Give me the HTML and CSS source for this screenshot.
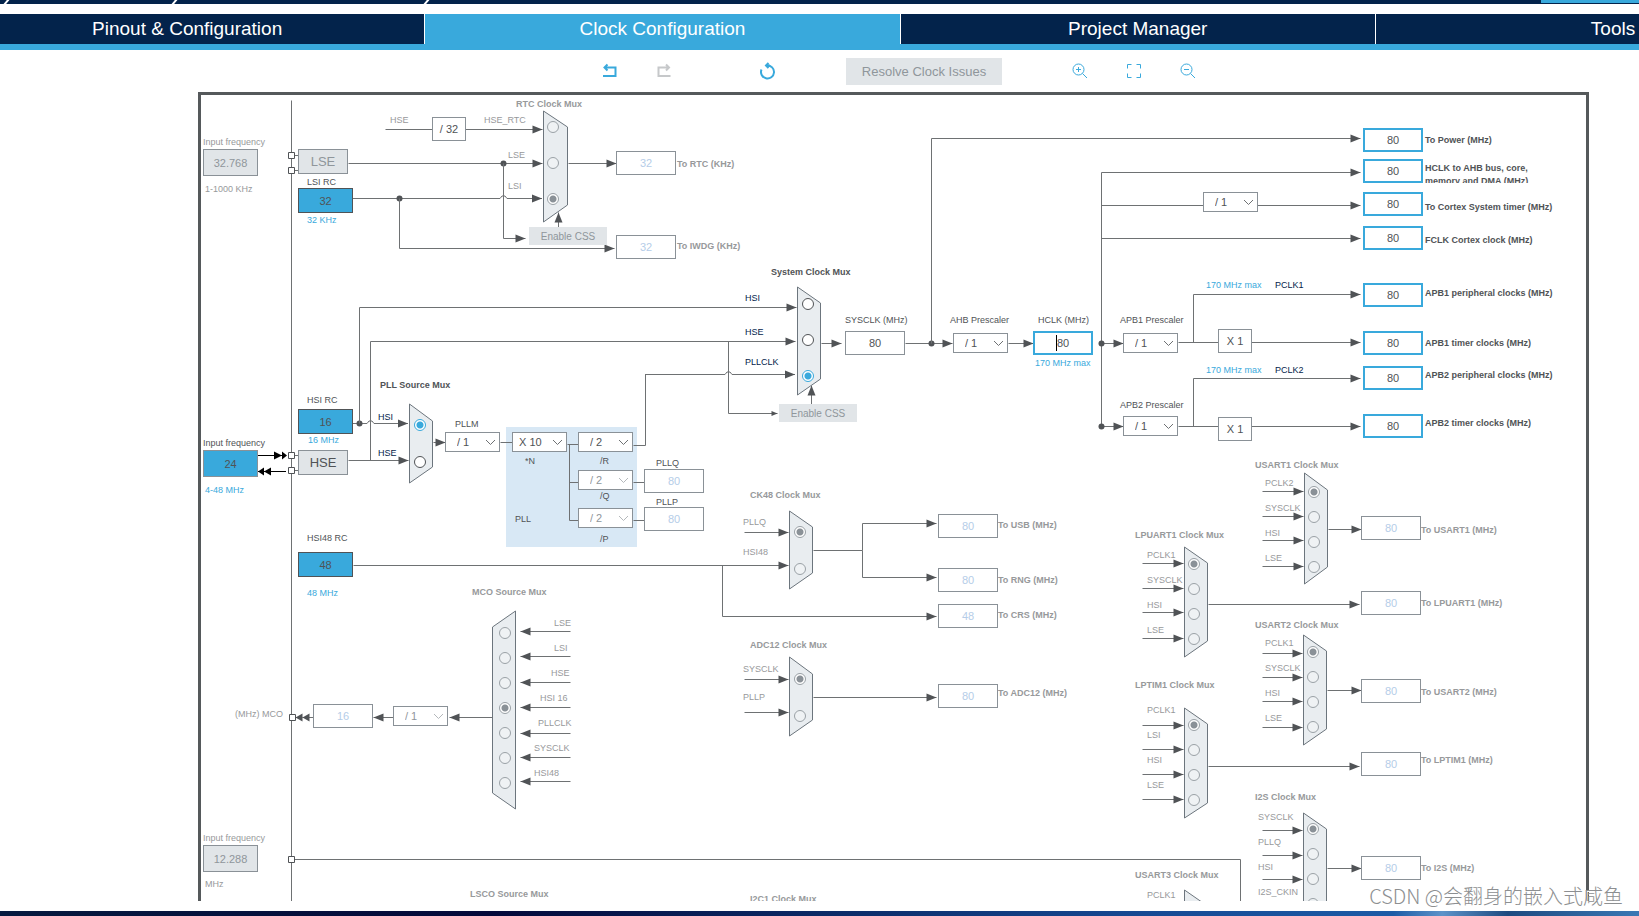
FILE: index.html
```html
<!DOCTYPE html>
<html lang="en">
<head>
<meta charset="utf-8">
<title>Clock Configuration</title>
<link rel="stylesheet" href="styles.css">
</head>
<body>
<div class="breadcrumb">
  <svg class="slashes" width="440" height="4" viewBox="0 0 440 4" aria-hidden="true">
    <path d="M4 5 9 -1M172 5 177 -1M424 5 429 -1"/>
  </svg>
  <span class="accent"></span>
</div>
<nav class="tabs">
  <button type="button" class="tab">Pinout &amp; Configuration</button>
  <button type="button" class="tab active">Clock Configuration</button>
  <button type="button" class="tab">Project Manager</button>
  <button type="button" class="tab">Tools</button>
</nav>
<div class="toolbar">
  <div class="group">
    <button type="button" class="tool" aria-label="Undo"><svg width="18" height="18" viewBox="0 0 18 18"><path class="bold" d="M4 5.500H14.500V14M2 14H15.500M6.500 2.500 3.500 5.500 6.500 8.500"/></svg></button>
    <button type="button" class="tool off" aria-label="Redo" disabled><svg width="18" height="18" viewBox="0 0 18 18"><path class="mid" d="M14 5.500H3.500V14H15.500M11 2.500 14 5.500 11 8.500"/></svg></button>
  </div>
  <button type="button" class="tool" aria-label="Reset"><svg width="18" height="18" viewBox="0 0 18 18"><path class="mid" d="M2.500 7.500A6.500 6.500 0 1 0 8 3.500H11M7 3.500H9M9.500 1 7 3.500 9.500 6"/></svg></button>
  <button type="button" class="resolve" disabled>Resolve Clock Issues</button>
  <div class="group">
    <button type="button" class="tool" aria-label="Zoom in"><svg width="18" height="18" viewBox="0 0 18 18"><circle cx="7.500" cy="7.500" r="5.500"/><path d="M11.500 11.500 16 16M5 7.500H10M7.500 5V10"/></svg></button>
    <button type="button" class="tool" aria-label="Fit"><svg width="18" height="18" viewBox="0 0 18 18"><path d="M2.500 6.500V2.500H6.500M11.500 2.500H15.500V6.500M15.500 11.500V15.500H11.500M6.500 15.500H2.500V11.500"/></svg></button>
    <button type="button" class="tool" aria-label="Zoom out"><svg width="18" height="18" viewBox="0 0 18 18"><circle cx="7.500" cy="7.500" r="5.500"/><path d="M11.500 11.500 16 16M5 7.500H10"/></svg></button>
  </div>
</div>
<main class="board" id="board"></main>
<footer class="desktop"></footer>
<p class="watermark" lang="zh">CSDN @会翻身的嵌入式咸鱼</p>
<script src="diagram.js"></script>
</body>
</html>
```
FILE: styles.css
```css
* { box-sizing: border-box; }

body {
  margin: 0;
  height: 100vh;
  display: flex;
  flex-direction: column;
  overflow: hidden;
  background: #fff;
  font-family: "Liberation Sans", Arial, sans-serif;
  color: #505356;
}

button, input, select { font-family: inherit; margin: 0; }

.breadcrumb {
  display: flex;
  justify-content: space-between;
  flex: none;
  height: 4px;
  background: #03234b;
  overflow: hidden;
}
.slashes { stroke: #fff; stroke-width: 2; fill: none; }
.accent { width: 6vw; height: 3px; background: #39a9dc; }

.tabs {
  display: flex;
  flex: none;
  margin-top: 10px;
  padding-bottom: 6px;
  background: #39a9dc;
  overflow: hidden;
}
.tab {
  flex: 0 0 29vw;
  height: 30px;
  padding: 0;
  border: 0;
  border-right: 1px solid #fff;
  background: #03234b;
  color: #fff;
  font-size: 19px;
}
.tab:first-child { margin-left: -50px; }
.tab.active { background: #39a9dc; }

.toolbar {
  display: flex;
  align-items: center;
  flex: none;
  height: 42px;
  padding-left: 601px;
}
.group { display: flex; gap: 36px; }
.tool {
  display: block;
  width: 18px;
  height: 18px;
  padding: 0;
  border: 0;
  background: none;
}
.tool svg { display: block; fill: none; stroke: #39a9dc; stroke-width: 1; }
.tool .bold { stroke-width: 2; }
.tool .mid { stroke-width: 2; }
.tool.off svg { stroke: #c6c8ca; }
.group + .tool { margin-left: 86px; }
.resolve {
  width: 156px;
  height: 27px;
  margin: 0 69px 0 69px;
  padding: 0;
  border: 0;
  background: #e1e5e8;
  color: #8f969b;
  font-size: 13px;
}

.board {
  position: relative;
  flex: 1;
  min-height: 0;
  margin: 0 50px 10px 198px;
  border: 3px solid #55595b;
  border-bottom: 0;
  overflow: hidden;
}
.desktop {
  flex: none;
  height: 5px;
  background: linear-gradient(90deg, #061a3f, #04093a 30%, #0b2a66 50%, #164a94 70%, #1c5ba6 85%, #5d93c9 88%, #1d4a80 92%, #3a78b5);
}
.watermark {
  position: absolute;
  right: 16px;
  bottom: 6px;
  margin: 0;
  font: 300 20px/28px "Noto Sans CJK SC", sans-serif;
  color: #8d8f91;
  text-shadow: 1px 1px 0 #fff;
}

/* diagram */
.wires { position: absolute; left: 0; top: 0; }
.wires .wire { fill: none; stroke: #6e7173; stroke-width: 1; }
.wires .tip { fill: #505356; }
.wires .black { fill: #000; }
.wires .wire.ink { stroke: #000; }
.wires .pin { fill: #fff; stroke: #505356; }
.wires .mux { fill: #e9edf0; stroke: #6c757d; }
.wires .pll { fill: #d8e8f5; }

.text {
  position: absolute;
  font-size: 9px;
  line-height: 12px;
  white-space: nowrap;
}
.gray { color: #97999b; }
.dark { color: #505356; }
.navy { color: #03234b; }
.blue { color: #39a9dc; }
.title { font-weight: bold; }
.wrap { width: 130px; height: 21px; line-height: 13px; white-space: normal; overflow: hidden; }

.box {
  position: absolute;
  width: 60px;
  height: 24px;
  padding: 0;
  border: 1px solid #8a9197;
  border-radius: 0;
  background: #fff;
  color: #505356;
  font-size: 11px;
  text-align: center;
  outline: 0;
}
.box.idle { color: #b5cde8; }
.box.live { border: 2px solid #39a9dc; }
.box.source { width: 55px; height: 25px; border-color: #505356; background: #39a9dc; }
.box.entry { width: 55px; height: 27px; border-color: #8a9197; background: #39a9dc; }
.box.entry.gray { background: #e1e5e8; color: #8f969b; }
.box.factor { width: 34px; }
.box.osc { width: 50px; height: 25px; background: #e1e5e8; font-size: 13px; }
.box.osc.gray { color: #8f969b; }
.css {
  position: absolute;
  width: 78px;
  height: 18px;
  padding: 0;
  border: 0;
  background: #e1e5e8;
  color: #8f969b;
  font-size: 10px;
}
.pick { position: absolute; width: 55px; height: 20px; }
.pick select {
  width: 100%;
  height: 100%;
  padding: 0 16px 0 6px;
  border: 1px solid #8a9197;
  border-radius: 0;
  background: #fff;
  color: #505356;
  font-size: 11px;
  appearance: none;
  opacity: 1;
}
.pick.slash select { padding-left: 11px; }
.pick svg { position: absolute; right: 4px; top: 7px; fill: none; stroke: #6e7173; pointer-events: none; }
.pick.off select { color: #8f969b; }
.pick.off svg { stroke: #b4b8bb; }

.radio {
  position: absolute;
  width: 12px;
  height: 12px;
  border: 1px solid #9aa1a6;
  border-radius: 50%;
  background: #eff2f4;
  appearance: none;
}
.radio:checked { background: radial-gradient(circle, #8a9197 3px, #fff 4px); }
.radio.on { border-color: #505356; background: #fff; }
.radio.on:checked { border-color: #39a9dc; background: radial-gradient(circle, #39a9dc 3px, #fff 4px); }
.caret { position: absolute; width: 1px; height: 16px; background: #000; }
```
FILE: diagram.js
```js
const board = document.getElementById('board');
const OX = 201, OY = 95;
const NS = 'http://www.w3.org/2000/svg';

const svg = document.createElementNS(NS, 'svg');
svg.setAttribute('class', 'wires');
svg.setAttribute('width', 1400);
svg.setAttribute('height', 820);
svg.setAttribute('viewBox', `${OX} ${OY} 1400 820`);
board.append(svg);

function shape(cls, d) {
  const p = document.createElementNS(NS, 'path');
  p.setAttribute('class', cls);
  p.setAttribute('d', d);
  svg.append(p);
}
function place(el, x, y) {
  el.style.left = `${x - OX}px`;
  el.style.top = `${y - OY}px`;
  board.append(el);
  return el;
}
function make(tag, cls, text) {
  const el = document.createElement(tag);
  el.className = cls;
  if (text !== undefined) el.textContent = text;
  return el;
}

const H = .5;
// Polyline through points; the last one may carry an arrow head.
function wire(points, head) {
  shape('wire', 'M' + points.map(([x, y]) => `${x + H} ${y + H}`).join('L'));
  if (!head) return;
  const [x, y] = points[points.length - 1];
  const s = head.size || 10, w = s > 6 ? 4 : 2.5, cx = x + H, cy = y + H;
  if (head.dir === 'r') shape('tip', `M${cx} ${cy}l${-s} ${-w}v${2 * w}z`);
  if (head.dir === 'l') shape('tip', `M${cx} ${cy}l${s} ${-w}v${2 * w}z`);
  if (head.dir === 'u') shape('tip', `M${cx} ${cy}l${-w} ${s}h${2 * w}z`);
}
const R = { dir: 'r' }, L = { dir: 'l' }, U = { dir: 'u' };
function dot(x, y) { shape('tip', `M${x - 2.5} ${y + H}a3 3 0 1 0 6 0a3 3 0 1 0 -6 0`); }
function pin(x, y) { shape('pin', `M${x - 2.5} ${y - 2.5}h6v6h-6z`); }
// Horizontal wire that jumps over a vertical one at x = hop.
function hopWire(x1, hop, x2, y) {
  shape('wire', `M${x1} ${y + H}H${hop - 3}L${hop - 1} ${y - 2}H${hop + 2}L${hop + 4} ${y + H}H${x2}`);
  shape('tip', `M${x2} ${y + H}l-10 -4v8z`);
}

function text(x, cy, str, cls = 'gray') { place(make('span', 'text ' + cls, str), x, cy - 6); }
function box(x, y, value, cls, label) {
  const el = make('input', 'box ' + cls);
  el.type = 'text';
  el.value = value;
  el.setAttribute('aria-label', label || 'Frequency');
  place(el, x, y);
}
function pick(x, y, value, off, label) {
  const w = make('span', 'pick' + (off ? ' off' : '') + (value[0] === '/' ? ' slash' : ''));
  const s = make('select', '');
  s.disabled = !!off;
  s.setAttribute('aria-label', label);
  s.append(make('option', '', value));
  w.append(s);
  w.insertAdjacentHTML('beforeend', '<svg width="11" height="7" viewBox="0 0 11 7"><path d="M1 1 5.500 5.500 10 1"/></svg>');
  place(w, x, y);
}
function button(x, y, str, cls) {
  const b = make('button', cls, str);
  b.type = 'button';
  place(b, x, y);
}
function mux(name, xl, xr, l, r, cx, ys, checked, cls = '') {
  shape('mux', `M${xl + H} ${l[0]}L${xr + H} ${r[0]}V${r[1]}L${xl + H} ${l[1]}z`);
  ys.forEach((y, i) => {
    const el = make('input', 'radio ' + cls);
    el.type = 'radio';
    el.name = name;
    el.checked = i === checked;
    el.setAttribute('aria-label', `${name} input ${i + 1}`);
    place(el, cx - 6, y - 6);
  });
}
function inputs(x1, tip, rows) { rows.forEach(y => wire([[x1, y], [tip, y]], R)); }
function labels(x, rows, cls) { rows.forEach(([y, s, dx]) => text(dx || x, y, s, cls)); }

// Chip boundary
wire([[291, 100], [291, 905]]);

// RTC
text(203, 142, 'Input frequency');
box(203, 149, '32.768', 'entry gray', 'LSE input frequency');
text(205, 189, '1-1000 KHz');
wire([[294, 155], [298, 155]]);
wire([[294, 170], [298, 170]]);
pin(291, 155);
pin(291, 170);
button(298, 149, 'LSE', 'box osc gray');
text(307, 182, 'LSI RC', 'dark');
box(298, 188, '32', 'source', 'LSI RC');
text(307, 220, '32 KHz', 'blue');
labels(390, [[120, 'HSE'], [120, 'HSE_RTC', 484], [155, 'LSE', 508], [186, 'LSI', 508]]);
text(516, 104, 'RTC Clock Mux', 'gray title');
wire([[385, 129], [542, 129]], R);
box(432, 117, '/ 32', 'factor', 'HSE divider');
wire([[348, 163], [542, 163]], R);
dot(503, 163);
wire([[503, 163], [503, 238], [525, 238]], R);
hopWire(353, 503, 542, 198);
dot(399, 198);
wire([[399, 198], [399, 248], [614, 248]], R);
wire([[558, 227], [558, 212]], U);
mux('RTC Clock Mux', 543, 567, [111, 222], [127, 205], 553, [127, 163, 199], 2);
button(529, 227, 'Enable CSS', 'css');
wire([[568, 163], [616, 163]], R);
box(616, 151, '32', 'idle', 'RTC');
text(677, 164, 'To RTC (KHz)', 'gray title');
box(616, 235, '32', 'idle', 'IWDG');
text(677, 246, 'To IWDG (KHz)', 'gray title');

// PLL source
text(203, 443, 'Input frequency', 'dark');
box(203, 450, '24', 'entry', 'HSE input frequency');
text(205, 490, '4-48 MHz', 'blue');
shape('wire ink', 'M258 455.5H286M258 471.5H286');
shape('black', 'M274 451.500l8 4l-8 4zM282 451.500l5 4l-5 4zM264 467.500l-6 4l6 4zM271 467.500l-7 4l7 4z');
wire([[294, 455], [298, 455]]);
wire([[294, 470], [298, 470]]);
pin(291, 455);
pin(291, 470);
button(298, 450, 'HSE', 'box osc');
text(307, 400, 'HSI RC', 'dark');
box(298, 409, '16', 'source', 'HSI RC');
text(308, 440, '16 MHz', 'blue');
text(380, 385, 'PLL Source Mux', 'dark title');
labels(378, [[417, 'HSI'], [453, 'HSE']], 'navy');
hopWire(353, 370, 408, 423);
dot(359, 423);
wire([[359, 423], [359, 307], [796, 307]], R);
wire([[348, 460], [408, 460]], R);
wire([[370, 460], [370, 341], [795, 341]], R);
mux('PLL Source Mux', 409, 432, [404, 483], [421, 467], 420, [425, 462], 0, 'on');
wire([[433, 442], [445, 442]], R);
text(455, 424, 'PLLM', 'dark');
shape('pll', 'M506 427H637V547H506z');
wire([[500, 442], [512, 442]]);
wire([[567, 444], [578, 444]]);
wire([[578, 520], [569, 520], [569, 444]]);
wire([[569, 482], [578, 482]]);
wire([[633, 482], [644, 482]]);
wire([[633, 520], [644, 520]]);
wire([[633, 445], [645, 445], [645, 374], [660, 374]]);
hopWire(645, 728, 795, 374);
pick(445, 432, '/ 1', false, 'PLLM');
pick(512, 432, 'X 10', false, 'PLLN');
pick(578, 432, '/ 2', false, 'PLLR');
pick(578, 470, '/ 2', true, 'PLLQ');
pick(578, 508, '/ 2', true, 'PLLP');
labels(600, [[461, '*N', 525], [461, '/R'], [496, '/Q'], [539, '/P'], [519, 'PLL', 515], [463, 'PLLQ', 656], [502, 'PLLP', 656]], 'dark');
box(644, 469, '80', 'idle', 'PLLQ');
box(644, 507, '80', 'idle', 'PLLP');

// System clock
text(771, 272, 'System Clock Mux', 'dark title');
labels(745, [[298, 'HSI'], [332, 'HSE'], [362, 'PLLCLK']], 'navy');
wire([[728, 341], [728, 413], [777, 413]], { dir: 'r', size: 6 });
wire([[811, 404], [811, 385]], U);
mux('System Clock Mux', 797, 820, [287, 395], [303, 379], 808, [304, 340, 376], 2, 'on');
button(779, 404, 'Enable CSS', 'css');
wire([[821, 343], [841, 343]], R);
labels(845, [[320, 'SYSCLK (MHz)'], [320, 'AHB Prescaler', 950], [320, 'HCLK (MHz)', 1038]], 'dark');
wire([[905, 343], [952, 343]], R);
dot(931, 343);
wire([[931, 343], [931, 138], [1360, 138]], R);
wire([[1008, 343], [1033, 343]], R);
box(845, 331, '80', '', 'SYSCLK');
pick(953, 333, '/ 1', false, 'AHB Prescaler');
box(1033, 331, '80', 'live', 'HCLK');
place(make('span', 'caret'), 1056, 335);
text(1035, 363, '170 MHz max', 'blue');

// Bus clocks
wire([[1101, 426], [1101, 172], [1360, 172]], R);
wire([[1101, 205], [1360, 205]], R);
wire([[1101, 238], [1360, 238]], R);
wire([[1101, 343], [1123, 343]], R);
wire([[1101, 426], [1123, 426]], R);
dot(1101, 343);
dot(1101, 426);
wire([[1178, 342], [1360, 342]], R);
wire([[1178, 426], [1360, 426]], R);
wire([[1193, 342], [1193, 294], [1360, 294]], R);
wire([[1193, 426], [1193, 378], [1360, 378]], R);
pick(1203, 192, '/ 1', false, 'Cortex timer prescaler');
pick(1123, 333, '/ 1', false, 'APB1 Prescaler');
pick(1123, 416, '/ 1', false, 'APB2 Prescaler');
box(1218, 329, 'X 1', 'factor', 'APB1 multiplier');
box(1218, 417, 'X 1', 'factor', 'APB2 multiplier');
labels(1120, [[320, 'APB1 Prescaler'], [405, 'APB2 Prescaler']], 'dark');
labels(1206, [[285, '170 MHz max'], [370, '170 MHz max']], 'blue');
labels(1275, [[285, 'PCLK1'], [370, 'PCLK2']], 'navy');
[
  [128, 140, 'To Power (MHz)'],
  [159, 168, 'HCLK to AHB bus, core, memory and DMA (MHz)', 'wrap'],
  [192, 207, 'To Cortex System timer (MHz)'],
  [226, 240, 'FCLK Cortex clock (MHz)'],
  [283, 293, 'APB1 peripheral clocks (MHz)'],
  [331, 343, 'APB1 timer clocks (MHz)'],
  [366, 375, 'APB2 peripheral clocks (MHz)'],
  [414, 423, 'APB2 timer clocks (MHz)']
].forEach(([y, cy, s, extra]) => {
  box(1363, y, '80', 'live', s);
  text(1425, cy, s, 'dark title ' + (extra || ''));
});

// CK48 and ADC12
text(307, 538, 'HSI48 RC', 'dark');
box(298, 552, '48', 'source', 'HSI48 RC');
text(307, 593, '48 MHz', 'blue');
text(750, 495, 'CK48 Clock Mux', 'gray title');
labels(743, [[522, 'PLLQ'], [552, 'HSI48'], [669, 'SYSCLK'], [697, 'PLLP']]);
wire([[353, 565], [788, 565]], R);
wire([[722, 565], [722, 616], [936, 616]], R);
inputs(744, 788, [532, 679, 712]);
mux('CK48 Clock Mux', 789, 812, [511, 589], [527, 573], 800, [532, 569], 0);
wire([[813, 550], [862, 550]]);
wire([[862, 550], [862, 523], [936, 523]], R);
wire([[862, 550], [862, 577], [936, 577]], R);
text(750, 645, 'ADC12 Clock Mux', 'gray title');
mux('ADC12 Clock Mux', 789, 812, [657, 736], [674, 720], 800, [679, 716], 0);
wire([[813, 697], [936, 697]], R);
[
  [514, 525, 'To USB (MHz)', '80'],
  [568, 580, 'To RNG (MHz)', '80'],
  [604, 615, 'To CRS (MHz)', '48'],
  [684, 693, 'To ADC12 (MHz)', '80']
].forEach(([y, cy, s, v]) => {
  box(938, y, v, 'idle', s);
  text(998, cy, s, 'gray title');
});

// MCO
text(472, 592, 'MCO Source Mux', 'gray title');
mux('MCO Source Mux', 515, 492, [611, 809], [627, 793], 505, [633, 658, 683, 708, 733, 758, 783], 3);
labels(554, [[623, 'LSE'], [648, 'LSI'], [673, 'HSE', 551], [698, 'HSI 16', 540], [723, 'PLLCLK', 538], [748, 'SYSCLK', 534], [773, 'HSI48', 534]]);
[631, 656, 682, 707, 733, 757, 781].forEach(y => wire([[570, y], [520, y]], L));
wire([[492, 717], [449, 717]], L);
wire([[393, 717], [373, 717]], L);
wire([[313, 717], [302, 717]], { dir: 'l', size: 7 });
wire([[302, 717], [295, 717]], { dir: 'l', size: 7 });
pin(292, 717);
pick(393, 706, '/ 1', true, 'MCO prescaler');
box(313, 704, '16', 'idle', 'MCO');
text(235, 714, '(MHz) MCO');

// External I2S clock
text(203, 838, 'Input frequency');
box(203, 845, '12.288', 'entry gray', 'I2S input frequency');
text(205, 884, 'MHz');
wire([[294, 859], [1240, 859], [1240, 905]]);
pin(291, 859);
text(470, 894, 'LSCO Source Mux', 'gray title');
text(750, 899, 'I2C1 Clock Mux', 'gray title');

// Peripheral muxes
function peripheral(o) {
  text(o.left ? 1135 : 1255, o.titleY, o.name + ' Clock Mux', 'gray title');
  labels(o.labelX, o.names.map((s, i) => [o.labelY + 25 * i, s]));
  inputs(o.left ? 1142 : 1262, o.x - 1, o.arrows);
  mux(o.name + ' Clock Mux', o.x, o.x + 23, o.l, o.r, o.x + 10, o.names.map((s, i) => o.radioY + 25 * i), 0);
  if (!o.outY) return;
  wire([[o.x + 24, o.outY], [o.left ? 1359 : 1361, o.outY]], R);
  box(1361, o.boxY, '80', 'idle', o.name);
  text(1421, o.textY, `To ${o.name} (MHz)`, 'gray title');
}
peripheral({ name: 'USART1', titleY: 465, labelX: 1265, labelY: 483, names: ['PCLK2', 'SYSCLK', 'HSI', 'LSE'], arrows: [491, 516, 540, 566], x: 1304, l: [473, 584], r: [490, 567], radioY: 492, outY: 529, boxY: 516, textY: 530 });
peripheral({ name: 'LPUART1', left: true, titleY: 535, labelX: 1147, labelY: 555, names: ['PCLK1', 'SYSCLK', 'HSI', 'LSE'], arrows: [563, 588, 612, 638], x: 1184, l: [547, 657], r: [563, 641], radioY: 564, outY: 604, boxY: 591, textY: 603 });
peripheral({ name: 'USART2', titleY: 625, labelX: 1265, labelY: 643, names: ['PCLK1', 'SYSCLK', 'HSI', 'LSE'], arrows: [653, 677, 701, 727], x: 1303, l: [635, 745], r: [651, 729], radioY: 652, outY: 690, boxY: 679, textY: 692 });
peripheral({ name: 'LPTIM1', left: true, titleY: 685, labelX: 1147, labelY: 710, names: ['PCLK1', 'LSI', 'HSI', 'LSE'], arrows: [725, 749, 774, 799], x: 1184, l: [708, 818], r: [724, 803], radioY: 725, outY: 766, boxY: 752, textY: 760 });
peripheral({ name: 'I2S', titleY: 797, labelX: 1258, labelY: 817, names: ['SYSCLK', 'PLLQ', 'HSI', 'I2S_CKIN'], arrows: [830, 855, 879], x: 1303, l: [813, 920], r: [829, 905], radioY: 829, outY: 868, boxY: 856, textY: 868 });
peripheral({ name: 'USART3', left: true, titleY: 875, labelX: 1147, labelY: 895, names: ['PCLK1'], arrows: [], x: 1184, l: [890, 1000], r: [906, 980], radioY: 915 });
```
